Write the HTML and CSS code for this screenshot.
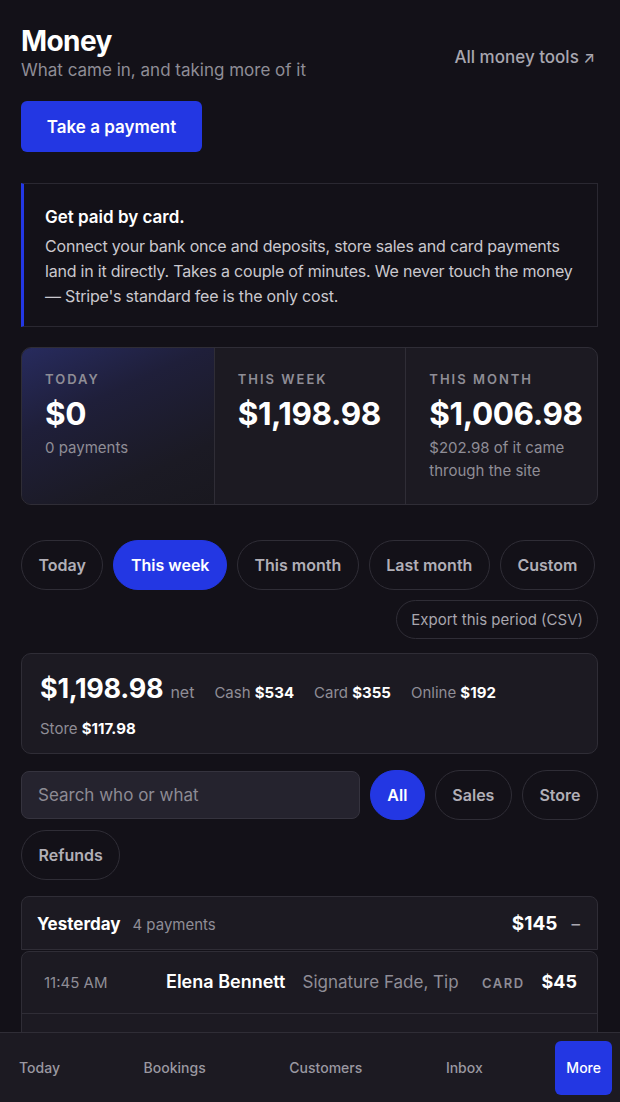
FILE: index.html
```html
<!DOCTYPE html>
<html lang="en">
<head>
<meta charset="utf-8">
<title>Money</title>
<link rel="stylesheet" href="styles.css">
</head>
<body>
<main class="page">
  <header class="head">
    <div class="head-text">
      <h1 class="title">Money</h1>
      <p class="subtitle">What came in, and taking more of it</p>
    </div>
    <a class="tools-link">All money tools <span class="arrow">↗</span></a>
  </header>

  <button class="primary-btn">Take a payment</button>

  <section class="notice">
    <h2 class="notice-title">Get paid by card.</h2>
    <p class="notice-body">Connect your bank once and deposits, store sales and card payments land in it directly. Takes a couple of minutes. We never touch the money — Stripe's standard fee is the only cost.</p>
  </section>

  <section class="stats">
    <div class="stat stat-active">
      <div class="stat-label">TODAY</div>
      <div class="stat-value">$0</div>
      <div class="stat-sub">0 payments</div>
    </div>
    <div class="stat">
      <div class="stat-label">THIS WEEK</div>
      <div class="stat-value">$1,198.98</div>
    </div>
    <div class="stat">
      <div class="stat-label">THIS MONTH</div>
      <div class="stat-value">$1,006.98</div>
      <div class="stat-sub">$202.98 of it came through the site</div>
    </div>
  </section>

  <div class="chips">
    <button class="chip">Today</button>
    <button class="chip chip-on">This week</button>
    <button class="chip">This month</button>
    <button class="chip">Last month</button>
    <button class="chip">Custom</button>
  </div>
  <div class="export-row">
    <button class="export-btn">Export this period (CSV)</button>
  </div>

  <section class="summary">
    <span class="sum-item"><span class="sum-total">$1,198.98</span> <span class="sum-net">net</span></span>
    <span class="sum-item">Cash <b>$534</b></span>
    <span class="sum-item">Card <b>$355</b></span>
    <span class="sum-item">Online <b>$192</b></span>
    <span class="sum-item">Store <b>$117.98</b></span>
  </section>

  <div class="filters">
    <input class="search" type="text" placeholder="Search who or what">
    <button class="chip chip-on">All</button>
    <button class="chip">Sales</button>
    <button class="chip">Store</button>
    <button class="chip">Refunds</button>
  </div>

  <section class="group">
    <div class="group-head">
      <span class="group-name">Yesterday</span>
      <span class="group-count">4 payments</span>
      <span class="group-total">$145</span>
      <span class="group-toggle">–</span>
    </div>
    <div class="rows">
      <div class="row">
        <span class="row-time">11:45 AM</span>
        <span class="row-name">Elena Bennett</span>
        <span class="row-desc">Signature Fade, Tip</span>
        <span class="row-method">CARD</span>
        <span class="row-amt">$45</span>
      </div>
      <div class="row">
        <span class="row-time">10:30 AM</span>
        <span class="row-name">Marcus Hale</span>
        <span class="row-desc">Beard Trim</span>
        <span class="row-method">CASH</span>
        <span class="row-amt">$35</span>
      </div>
    </div>
  </section>
</main>

<nav class="tabbar">
  <a class="tab">Today</a>
  <a class="tab">Bookings</a>
  <a class="tab">Customers</a>
  <a class="tab">Inbox</a>
  <a class="tab tab-on">More</a>
</nav>
</body>
</html>
```

FILE: styles.css
```css
* { box-sizing: border-box; }
html, body { margin: 0; padding: 0; }
body {
  background: #131118;
  color: #f2f1f5;
  font-family: Inter, "Noto Sans", "Liberation Sans", sans-serif;
  -webkit-font-smoothing: antialiased;
}
button, input { font-family: inherit; }

.page {
  padding: 24px 22px 120px 21px;
}

.head {
  display: flex;
  justify-content: space-between;
  align-items: flex-start;
}
.title {
  margin: 0;
  font-size: 28px;
  line-height: 34px;
  font-weight: 700;
  letter-spacing: -0.6px;
  color: #ffffff;
}
.subtitle {
  margin: 1px 0 0;
  font-size: 17px;
  line-height: 22px;
  color: #8f8d96;
}
.tools-link {
  margin-top: 22px;
  font-size: 17px;
  line-height: 22px;
  font-weight: 500;
  color: #a9a7b0;
  padding-right: 3px;
}
.arrow { font-size: 15px; }

.primary-btn {
  margin-top: 20px;
  display: block;
  width: 181px;
  height: 51px;
  border: 0;
  border-radius: 6px;
  background: #2337e3;
  color: #ffffff;
  font-size: 17px;
  font-weight: 600;
}

.notice {
  margin-top: 31px;
  border: 1px solid #2a2831;
  border-left: 3px solid #2337e3;
  padding: 21px 20px 17px 21px;
}
.notice-title {
  margin: 0;
  font-size: 17px;
  line-height: 24px;
  font-weight: 600;
  color: #ffffff;
}
.notice-body {
  margin: 5px 0 0;
  font-size: 16px;
  line-height: 25px;
  letter-spacing: -0.2px;
  color: #cac8ce;
}

.stats {
  margin-top: 20px;
  display: grid;
  grid-template-columns: 1fr 1fr 1fr;
  border: 1px solid #2f2d36;
  border-radius: 10px;
  background: #1c1a22;
  overflow: hidden;
}
.stat {
  padding: 23px 14px 22px 23px;
  border-left: 1px solid #2f2d36;
  min-height: 155px;
}
.stat:first-child { border-left: 0; }
.stat-active {
  background: linear-gradient(155deg, #272b5e 0%, #1f1f3a 35%, #1b1a24 75%, #19181f 100%);
}
.stat-label {
  font-size: 13px;
  line-height: 16px;
  font-weight: 600;
  letter-spacing: 2px;
  color: #8f8d96;
}
.stat-value {
  margin-top: 8px;
  font-size: 31.5px;
  line-height: 38px;
  font-weight: 700;
  letter-spacing: -0.4px;
  color: #ffffff;
}
.stat-sub {
  margin-top: 3px;
  font-size: 15px;
  line-height: 23px;
  color: #8f8d96;
}

.chips {
  margin-top: 35px;
  display: flex;
  flex-wrap: wrap;
  gap: 10px;
}
.chip {
  flex: none;
  height: 50px;
  padding: 0 16.5px;
  border: 1px solid #2f2d36;
  border-radius: 25px;
  background: transparent;
  color: #b1afb7;
  font-size: 16px;
  font-weight: 600;
}
.chip-on {
  background: #2337e3;
  border-color: #2337e3;
  color: #ffffff;
}
.export-row {
  margin-top: 10px;
  display: flex;
  justify-content: flex-end;
}
.export-btn {
  height: 39px;
  padding: 0 14px;
  border: 1px solid #2f2d36;
  border-radius: 20px;
  background: transparent;
  color: #a8a6ae;
  font-size: 15px;
}

.summary {
  margin-top: 14px;
  display: flex;
  flex-wrap: wrap;
  align-items: baseline;
  column-gap: 20px;
  row-gap: 13px;
  padding: 18px 18px 14px;
  border: 1px solid #2f2d36;
  border-radius: 10px;
  background: #1c1a22;
  font-size: 15px;
  line-height: 20px;
  color: #8f8d96;
}
.summary b { color: #ffffff; font-weight: 700; }
.sum-total {
  font-size: 27px;
  line-height: 34px;
  font-weight: 700;
  color: #ffffff;
  letter-spacing: -0.3px;
}
.sum-net { font-size: 16px; margin-left: 3px; }

.filters {
  margin-top: 16px;
  display: flex;
  flex-wrap: wrap;
  gap: 10px;
  align-items: center;
}
.search {
  flex: 1 1 280px;
  height: 48px;
  padding: 0 16px;
  border: 1px solid #35333e;
  border-radius: 8px;
  background: #25232e;
  color: #ffffff;
  font-size: 17px;
  outline: none;
}
.search::placeholder { color: #8d8b94; }

.group { margin-top: 16px; }
.group-head {
  display: flex;
  align-items: baseline;
  height: 54px;
  padding: 15px 17px 0 15px;
  border: 1px solid #2f2d36;
  border-radius: 8px 8px 0 0;
  background: #1c1a22;
}
.group-name {
  font-size: 17px;
  font-weight: 700;
  color: #ffffff;
}
.group-count {
  margin-left: 12px;
  font-size: 15px;
  color: #8f8d96;
  flex: 1;
}
.group-total {
  font-size: 19px;
  font-weight: 700;
  color: #ffffff;
}
.group-toggle {
  margin-left: 14px;
  font-size: 17px;
  color: #a9a7b0;
}
.rows {
  margin-top: 1px;
  border: 1px solid #2f2d36;
  border-radius: 8px 8px 0 0;
  background: #1c1a22;
}
.row {
  display: grid;
  grid-template-columns: 105px auto 1fr auto auto;
  column-gap: 17px;
  align-items: baseline;
  height: 62px;
  padding: 19px 20px 0 22px;
  border-bottom: 1px solid #2f2d36;
}
.row-time { font-size: 15px; color: #8f8d96; }
.row-name { font-size: 18px; font-weight: 600; color: #ffffff; }
.row-desc { font-size: 17px; color: #8f8d96; }
.row-method {
  font-size: 13px;
  font-weight: 600;
  letter-spacing: 1.5px;
  color: #8f8d96;
}
.row-amt { font-size: 18px; font-weight: 700; color: #ffffff; }

.tabbar {
  position: fixed;
  left: 0;
  right: 0;
  bottom: 0;
  height: 70px;
  display: flex;
  justify-content: space-between;
  align-items: center;
  padding: 0 8px;
  background: #1c1a22;
  border-top: 1px solid #2f2d36;
}
.tab {
  display: flex;
  align-items: center;
  height: 54px;
  padding: 0 11px;
  border-radius: 6px;
  font-size: 14px;
  font-weight: 500;
  color: #9a98a1;
}
.tab-on {
  background: #2337e3;
  color: #ffffff;
}
```
